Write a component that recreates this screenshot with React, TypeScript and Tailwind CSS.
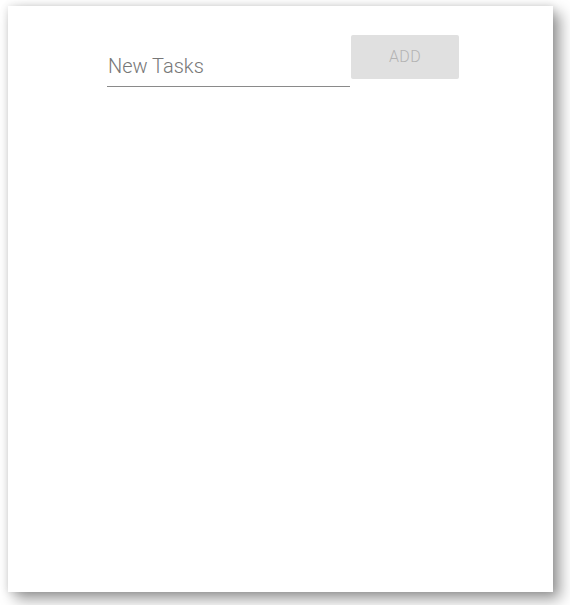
import React, { useState } from "react";

const App: React.FC = () => {
    const [task, setTask] = useState<string>('');

    return (
        <div className="w-[570px] h-[605px] bg-white overflow-hidden" style={{ fontFamily: 'Roboto, "Liberation Sans", sans-serif' }}>
            <div className="ml-[8px] mt-[6px] w-[545px] h-[586px] bg-white shadow-[0_0_8px_rgba(0,0,0,0.12),7px_7px_14px_rgba(0,0,0,0.4)]">
                <div className="flex items-start pl-[99px] pt-[29px]">
                    <input
                        type="text"
                        value={task}
                        onChange={(e) => setTask(e.target.value)}
                        placeholder="New Tasks"
                        className="mt-[16px] w-[243px] h-[36px] border-b border-[#8a8a8a] outline-none text-[20px] font-light text-[#555] placeholder:text-[#777] pl-[1px] pb-[6px]"
                    />
                    <button className="ml-[1px] w-[108px] h-[44px] bg-[#e0e0e0] text-[#b3b3b3] text-[16px] font-light tracking-wide rounded-[2px]">
                        ADD
                    </button>
                </div>
            </div>
        </div>
    );
};

export default App;
